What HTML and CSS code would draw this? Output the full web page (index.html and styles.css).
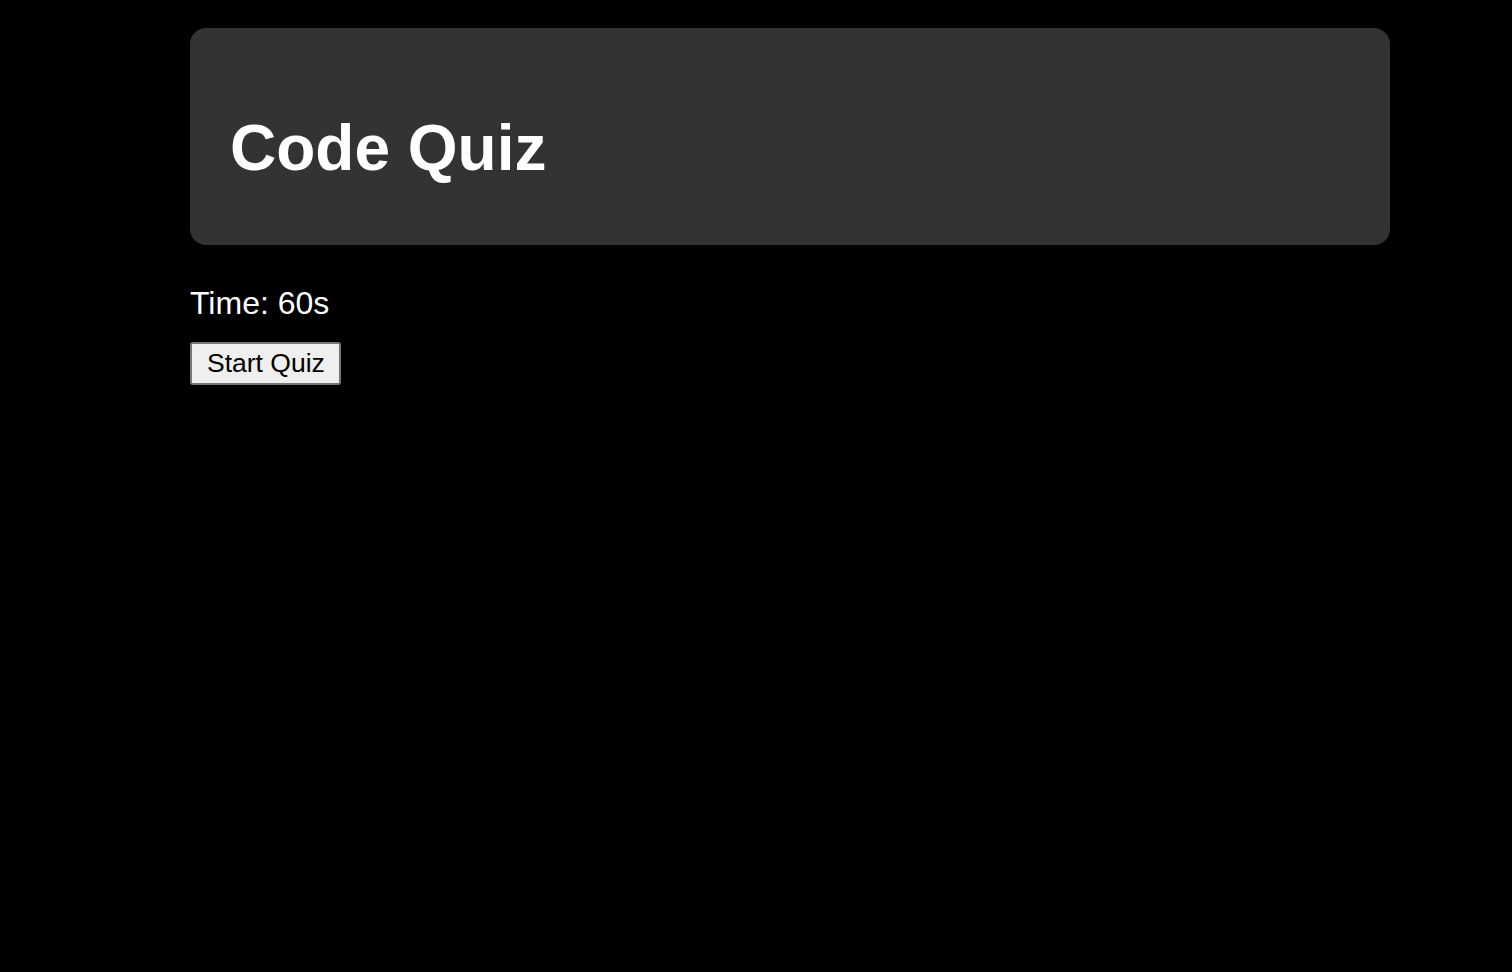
FILE: index.html
```html
<!DOCTYPE html>
<html lang="en">
<head>
<meta charset="utf-8">
<title>Code Quiz</title>
<link rel="stylesheet" href="styles.css">
</head>
<body>
<div class="container">
  <header class="banner">
    <h1 class="title">Code Quiz</h1>
  </header>
  <p class="timer">Time: 60s</p>
  <button class="start-btn" type="button">Start Quiz</button>
</div>
</body>
</html>
```
FILE: styles.css
```css
html, body {
  margin: 0;
  padding: 0;
  background: #000;
  color: #fff;
  font-family: "Liberation Sans", Arial, sans-serif;
}
.container {
  width: 1200px;
  margin-left: 190px;
  padding-top: 28px;
}
.banner {
  background: #333333;
  border-radius: 16px;
  padding: 40px;
}
.title {
  margin: 43px 0 20px;
  font-size: 64px;
  font-weight: bold;
  color: #fff;
}
.timer {
  margin: 40px 0 20px;
  font-size: 32px;
}
.start-btn {
  font-family: "Liberation Sans", Arial, sans-serif;
  font-size: 26.5px;
  color: #000;
  background: #efefef;
  border: 2px solid #767676;
  border-radius: 3px;
  padding: 4px 14px 4px 15px;
  margin: 0;
}
```
